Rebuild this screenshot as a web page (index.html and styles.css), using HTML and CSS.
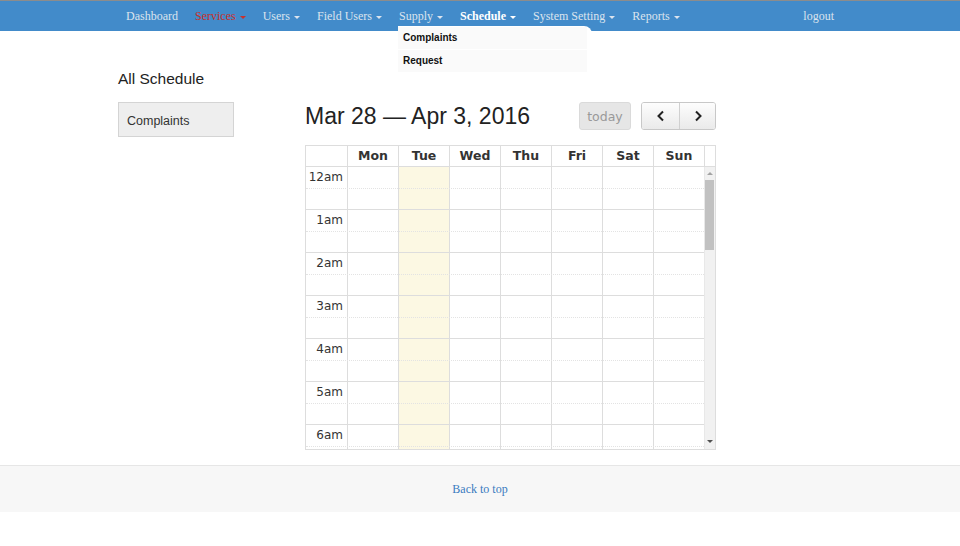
FILE: index.html
```html
<!DOCTYPE html>
<html>
<head>
<meta charset="utf-8">
<link rel="stylesheet" href="styles.css">
</head>
<body>
<nav class="navbar">
  <ul class="nav">
    <li class="nav-item">Dashboard</li>
    <li class="nav-item red">Services<span class="caret"></span></li>
    <li class="nav-item">Users<span class="caret"></span></li>
    <li class="nav-item">Field Users<span class="caret"></span></li>
    <li class="nav-item">Supply<span class="caret"></span></li>
    <li class="nav-item active">Schedule<span class="caret"></span>
      <div class="dropdown">
        <div class="dd-item">Complaints</div>
        <div class="dd-item">Request</div>
      </div>
    </li>
    <li class="nav-item">System Setting<span class="caret"></span></li>
    <li class="nav-item">Reports<span class="caret"></span></li>
    <li class="nav-item logout">logout</li>
  </ul>
</nav>

<main class="main">
  <aside class="side">
    <h3 class="side-title">All Schedule</h3>
    <div class="side-box">Complaints</div>
  </aside>
  <section class="calendar">
    <div class="toolbar">
      <h2 class="cal-title">Mar 28 — Apr 3, 2016</h2>
      <button class="btn-today">today</button>
      <div class="btn-group">
        <button class="btn-nav"><svg width="10" height="12" viewBox="0 0 10 12"><polyline points="7,1.5 2.5,6 7,10.5" fill="none" stroke="#222" stroke-width="2"/></svg></button>
        <button class="btn-nav"><svg width="10" height="12" viewBox="0 0 10 12"><polyline points="3,1.5 7.5,6 3,10.5" fill="none" stroke="#222" stroke-width="2"/></svg></button>
      </div>
    </div>
    <div class="cal-grid">
      <div class="cal-head">
        <div class="hcell axis"></div>
        <div class="hcell">Mon</div>
        <div class="hcell">Tue</div>
        <div class="hcell">Wed</div>
        <div class="hcell">Thu</div>
        <div class="hcell">Fri</div>
        <div class="hcell">Sat</div>
        <div class="hcell">Sun</div>
        <div class="hcell gutter"></div>
      </div>
      <div class="cal-body">
        <div class="cal-scroll">
          <div class="cols">
            <div class="col axis"></div>
            <div class="col"></div>
            <div class="col today"></div>
            <div class="col"></div>
            <div class="col"></div>
            <div class="col"></div>
            <div class="col"></div>
            <div class="col"></div>
          </div>
          <div class="rows">
            <div class="slot"><span class="label">12am</span></div>
            <div class="slot minor"></div>
            <div class="slot"><span class="label">1am</span></div>
            <div class="slot minor"></div>
            <div class="slot"><span class="label">2am</span></div>
            <div class="slot minor"></div>
            <div class="slot"><span class="label">3am</span></div>
            <div class="slot minor"></div>
            <div class="slot"><span class="label">4am</span></div>
            <div class="slot minor"></div>
            <div class="slot"><span class="label">5am</span></div>
            <div class="slot minor"></div>
            <div class="slot"><span class="label">6am</span></div>
            <div class="slot minor"></div>
          </div>
        </div>
        <div class="scrollbar">
          <div class="sb-arrow up"></div>
          <div class="sb-thumb"></div>
          <div class="sb-track"></div>
          <div class="sb-arrow down"></div>
        </div>
      </div>
    </div>
  </section>
</main>

<footer class="footer">
  <span class="back-top">Back to top</span>
</footer>
</body>
</html>
```

FILE: styles.css
```css
* { box-sizing: border-box; }
html, body { margin: 0; padding: 0; background: #fff; }
body { font-family: "Liberation Sans", Arial, sans-serif; color: #333; width: 960px; }

.navbar {
  height: 31px;
  background: #428bca;
  border-top: 1px solid #8c8c8c;
}
.nav {
  list-style: none;
  margin: 0;
  padding: 0 126px;
  display: flex;
  align-items: center;
  height: 30px;
  gap: 17px;
}
.nav-item {
  position: relative;
  font-family: "Liberation Serif", "DejaVu Serif", serif;
  font-size: 12px;
  color: #dbe4ee;
  white-space: nowrap;
  line-height: 30px;
}
.nav-item.red { color: #c9302c; }
.nav-item.active { color: #fff; font-weight: bold; }
.nav-item.logout { margin-left: auto; }
.caret {
  display: inline-block;
  width: 0;
  height: 0;
  margin-left: 4px;
  vertical-align: middle;
  border-top: 3px solid currentColor;
  border-left: 3px solid transparent;
  border-right: 3px solid transparent;
}
.dropdown {
  position: absolute;
  top: 25px;
  left: -62px;
  width: 194px;
  padding-top: 1px;
  background: #fff;
  border-radius: 0 8px 0 0;
  z-index: 5;
}
.dd-item {
  width: 189px;
  height: 22px;
  line-height: 21px;
  padding-left: 5px;
  background: #fafafa;
  font-family: "Liberation Sans", Arial, sans-serif;
  font-weight: bold;
  font-size: 10px;
  color: #111;
}
.dd-item + .dd-item { margin-top: 1px; height: 22px; line-height: 22px; }

.main {
  display: flex;
  align-items: flex-start;
  padding: 38px 0 0 118px;
}
.side { width: 187px; }
.side-title {
  margin: 0;
  font-weight: normal;
  font-size: 15.5px;
  line-height: 20px;
  color: #222;
}
.side-box {
  margin-top: 13px;
  width: 116px;
  height: 35px;
  background: #eee;
  border: 1px solid #d4d4d4;
  font-size: 12.5px;
  line-height: 33px;
  padding: 2px 0 0 8px;
  color: #333;
}

.calendar { width: 411px; padding-top: 33px; }
.toolbar {
  display: flex;
  align-items: center;
  height: 28px;
}
.cal-title {
  margin: 0;
  font-weight: normal;
  font-size: 23px;
  color: #222;
  flex: 1;
  line-height: 26px;
}
.btn-today {
  width: 52px;
  height: 28px;
  margin-right: 10px;
  background: #e6e6e6;
  border: 1px solid #dadada;
  border-radius: 3px;
  color: #999;
  font-family: "DejaVu Sans", Verdana, sans-serif;
  font-size: 12.5px;
  padding: 0;
}
.btn-group {
  display: flex;
  border: 1px solid #c8c8c8;
  border-radius: 3px;
  overflow: hidden;
  height: 28px;
}
.btn-nav {
  width: 37px;
  height: 26px;
  padding: 0;
  border: 0;
  background: linear-gradient(#fdfdfd, #eaeaea);
  display: flex;
  align-items: center;
  justify-content: center;
}
.btn-nav + .btn-nav { border-left: 1px solid #d0d0d0; width: 36px; }

.cal-grid {
  margin-top: 15px;
  border: 1px solid #ddd;
  width: 411px;
}
.cal-head {
  display: grid;
  grid-template-columns: 41px repeat(7, 51px) 1fr;
  height: 21px;
  border-bottom: 1px solid #ddd;
}
.hcell {
  border-left: 1px solid #ddd;
  text-align: center;
  font-family: "DejaVu Sans", Verdana, sans-serif;
  font-weight: bold;
  font-size: 12.5px;
  line-height: 20px;
  color: #333;
}
.hcell.axis { border-left: 0; }

.cal-body {
  display: flex;
  height: 282px;
  overflow: hidden;
}
.cal-scroll {
  width: 398px;
  flex: none;
  display: grid;
}
.cols, .rows { grid-area: 1 / 1; }
.cols {
  display: grid;
  grid-template-columns: 41px repeat(7, 51px);
}
.col { border-left: 1px solid #ddd; }
.col.axis { border-left: 0; }
.col.today { background: #fcf8e3; }
.rows { display: flex; flex-direction: column; }
.slot {
  height: 21.5px;
  flex: none;
  border-bottom: 1px dotted #e3e3e3;
  display: flex;
}
.slot.minor { border-bottom: 1px solid #ddd; }
.label {
  width: 41px;
  text-align: right;
  padding-right: 4px;
  font-family: "DejaVu Sans", Verdana, sans-serif;
  font-size: 12px;
  line-height: 21px;
  color: #333;
}

.scrollbar {
  flex: 1;
  border-left: 1px solid #e8e8e8;
  background: #f1f1f1;
  display: flex;
  flex-direction: column;
}
.sb-arrow { height: 13px; flex: none; position: relative; }
.sb-arrow.up::after, .sb-arrow.down::after {
  content: "";
  position: absolute;
  left: 2px;
  width: 0; height: 0;
  border-left: 3px solid transparent;
  border-right: 3px solid transparent;
}
.sb-arrow.up::after { top: 5px; border-bottom: 3px solid #a3a3a3; }
.sb-arrow.down::after { top: 4px; border-top: 3px solid #505050; }
.sb-thumb {
  height: 70px;
  flex: none;
  margin: 0 1px 0 0;
  background: #c1c1c1;
}
.sb-track { flex: 1; }

.footer {
  margin-top: 15px;
  height: 47px;
  background: #f7f7f7;
  border-top: 1px solid #e6e6e6;
  display: flex;
  justify-content: center;
  align-items: center;
}
.back-top {
  font-family: "Liberation Serif", "DejaVu Serif", serif;
  font-size: 12px;
  color: #3a7bbf;
}
```
